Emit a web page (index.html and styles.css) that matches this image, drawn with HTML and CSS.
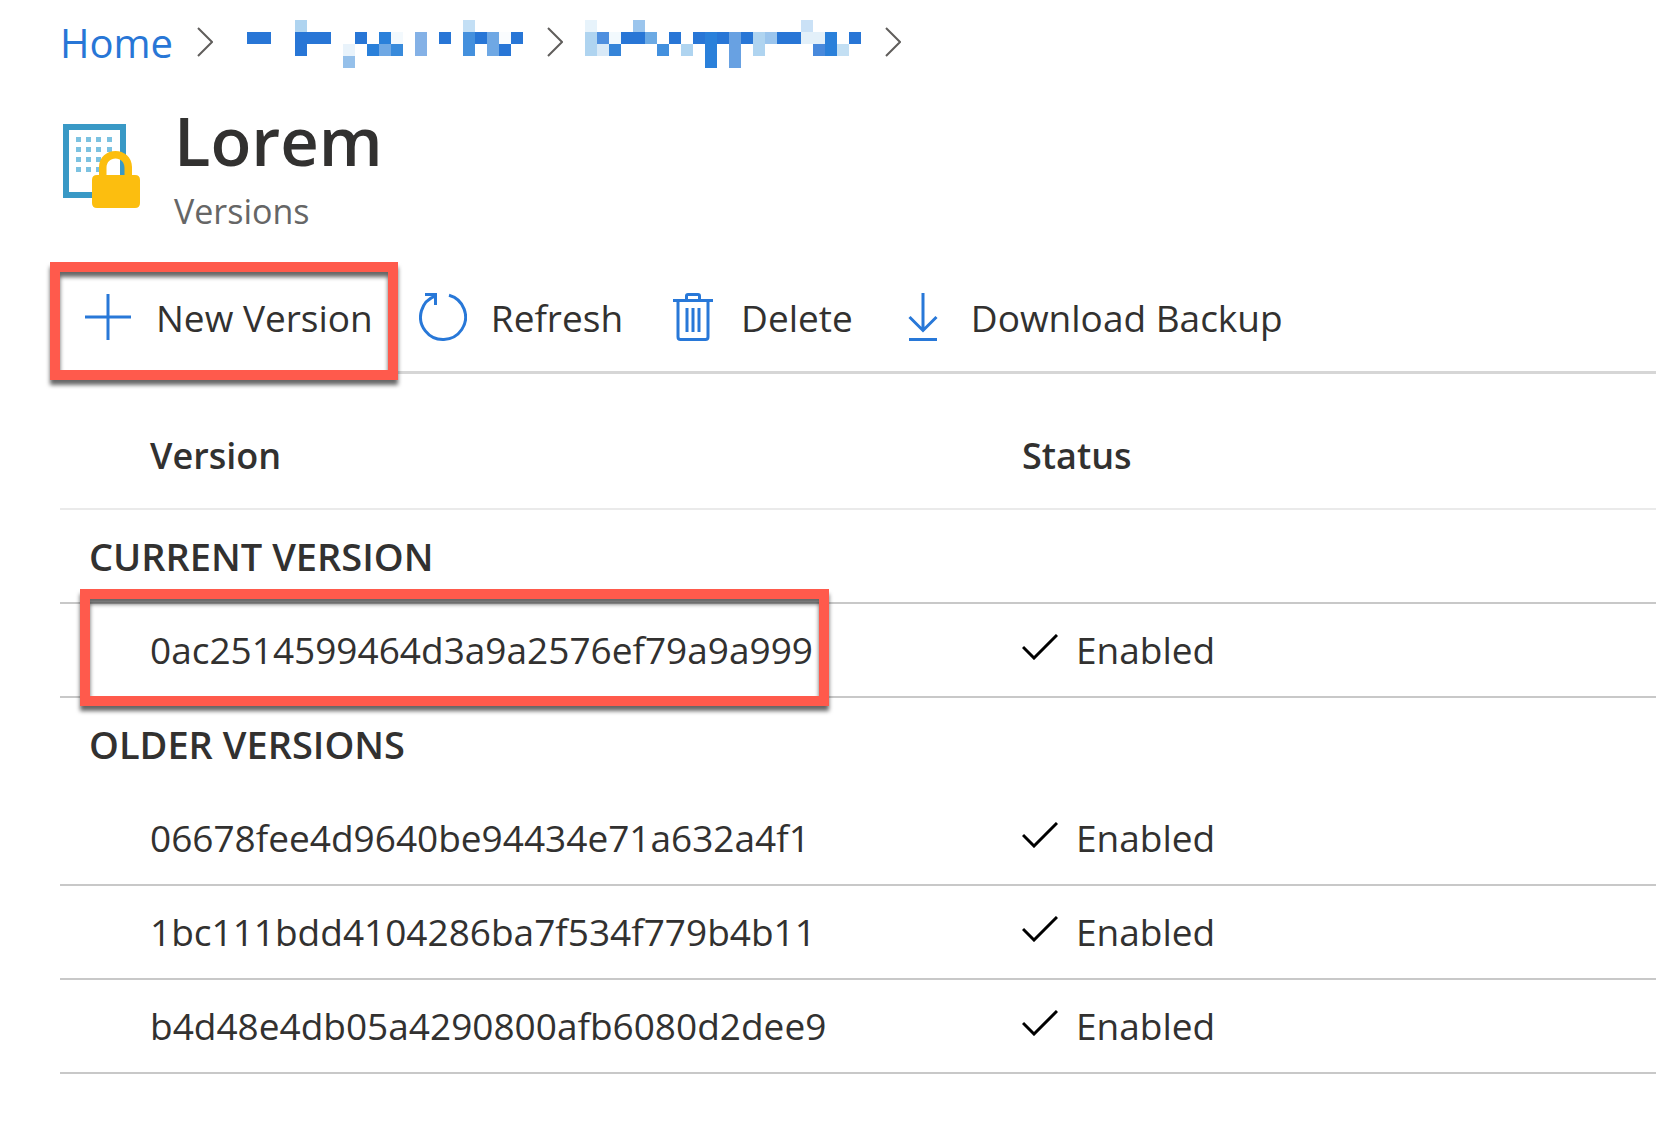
FILE: index.html
```html
<!DOCTYPE html>
<html lang="en">
<head>
    <meta charset="UTF-8">
    <meta name="viewport" content="width=device-width, initial-scale=1.0">
    <title>Lorem - Versions</title>
    <link rel="stylesheet" href="styles.css">
</head>
<body>
    <nav class="breadcrumb" aria-label="Breadcrumb">
        <a href="#">Home</a>
        <svg class="chevron" viewBox="0 0 16 30" aria-hidden="true"><path d="M1 1l14 14L1 29"/></svg>
        <a href="#" aria-label="Resource">
            <!-- redacted name, 12px blocks -->
            <svg class="redacted" width="288" height="54" viewBox="-12 -5 288 54" shape-rendering="crispEdges">
                <path fill="#2876d6" d="M0 12h24v12H0zM48 12h36v12H60v12H48zM108 12h12v12h-12zM192 12h12v12h-12zM228 12h12v12h-12zM252 24h12v12h-12zM264 12h12v12h-12z"/>
                <path fill="#2a80da" d="M120 24h12v12h-12zM132 12h12v12h-12z"/>
                <path fill="#afd4f0" d="M48 0h12v12H48z"/>
                <path fill="#e9f3fb" d="M96 24h12v12H96z"/>
                <path fill="#95c0ea" d="M96 36h12v12H96z"/>
                <path fill="#6fa8e4" d="M132 24h12v12h-12zM240 12h12v24h-12z"/>
                <path fill="#f3f9fd" d="M144 12h12v12h-12z"/>
                <path fill="#388adb" d="M144 24h12v12h-12z"/>
                <path fill="#84b1e6" d="M168 12h12v24h-12z"/>
                <path fill="#c3dff5" d="M216 0h12v12h-12z"/>
                <path fill="#4490dd" d="M216 12h12v24h-12z"/>
                <path fill="#fafcfe" d="M252 12h12v12h-12z"/>
            </svg>
        </a>
        <svg class="chevron" viewBox="0 0 16 30" aria-hidden="true"><path d="M1 1l14 14L1 29"/></svg>
        <a href="#" aria-label="Secrets">
            <svg class="redacted" width="276" height="54" viewBox="0 -5 276 54" shape-rendering="crispEdges">
                <path fill="#2876d6" d="M36 12h24v12H36zM84 12h12v12H84zM108 12h12v12h-12zM132 12h12v12h-12zM156 12h12v12h-12zM192 12h24v12h-24zM264 12h12v12h-12z"/>
                <path fill="#2a80da" d="M120 12h12v36h-12zM240 12h12v24h-12z"/>
                <path fill="#afd4f0" d="M0 12h12v24H0zM96 24h12v12H96zM168 12h12v24h-12z"/>
                <path fill="#e7f3fb" d="M0 0h12v12H0z"/>
                <path fill="#4e8fdf" d="M12 12h12v12H12z"/>
                <path fill="#d8e9f7" d="M12 24h12v12H12z"/>
                <path fill="#f2f9fd" d="M24 12h12v12H24z"/>
                <path fill="#3584d8" d="M24 24h12v12H24z"/>
                <path fill="#9bc5ed" d="M48 0h12v12H48zM180 12h12v12h-12z"/>
                <path fill="#6caae4" d="M60 12h12v12H60z"/>
                <path fill="#4390de" d="M72 24h12v12H72z"/>
                <path fill="#68a1e2" d="M144 12h12v36h-12z"/>
                <path fill="#cae1f6" d="M216 0h12v12h-12z"/>
                <path fill="#e3f0f9" d="M216 12h24v12h-24z"/>
                <path fill="#4889dc" d="M228 24h12v12h-12z"/>
                <path fill="#c3dff3" d="M252 24h12v12h-12z"/>
            </svg>
        </a>
        <svg class="chevron" viewBox="0 0 16 30" aria-hidden="true"><path d="M1 1l14 14L1 29"/></svg>
    </nav>

    <header class="page-header">
        <svg class="secret-icon" viewBox="0 0 78 84" aria-hidden="true">
            <path fill="#fff" stroke="#3999c6" stroke-width="6" d="M3 3h57v68H3z"/>
            <path fill="#7cc2e1" d="M13 13h5v5h-5zM23 13h5v5h-5zM33 13h5v5h-5zM44 13h5v5h-5zM13 23h5v5h-5zM23 23h5v5h-5zM33 23h5v5h-5zM44 23h5v5h-5zM13 33h5v5h-5zM23 33h5v5h-5zM33 33h5v5h-5zM13 43h5v5h-5zM23 43h5v5h-5zM33 43h5v5h-5z"/>
            <path fill="#fcbe0f" fill-rule="evenodd" d="M36 51V43C36 33 44 27 52.500 27S69 33 69 43v8h3q5 0 5 5v23q0 5-5 5H34q-5 0-5-5V56q0-5 5-5zM43.500 51h18v-7c0-6-4-9.500-9-9.500s-9 3.500-9 9.500z"/>
        </svg>
        <div>
            <h1>Lorem</h1>
            <p>Versions</p>
        </div>
    </header>

    <div class="toolbar">
        <button type="button">
            <svg viewBox="0 0 48 48" aria-hidden="true"><path d="M1 24h46M24 1v46"/></svg>
            New Version
            <span class="highlight"></span>
        </button>
        <button type="button">
            <svg viewBox="0 0 48 48" aria-hidden="true"><path d="M30 2.300A22.500 22.500 0 1 1 16.500 2.800M6 1.500h10.500V12"/></svg>
            Refresh
        </button>
        <button type="button">
            <svg viewBox="0 0 48 48" aria-hidden="true"><path d="M4 7.500h40M9 8v36q0 2.500 2.500 2.500h25q2.500 0 2.500-2.500V8M17.500 7V3q0-1.500 1.500-1.500h10q1.500 0 1.500 1.500v4M18 15v24M24 15v24M30 15v24"/></svg>
            Delete
        </button>
        <button type="button">
            <svg viewBox="0 0 48 48" aria-hidden="true"><path d="M24 0v37M10.500 24L24 37.500 37.500 24M10 46.500h28"/></svg>
            Download Backup
        </button>
    </div>

    <table class="versions">
        <thead>
            <tr>
                <th class="col-version">Version</th>
                <th>Status</th>
            </tr>
        </thead>
        <tbody>
            <tr>
                <th class="group" colspan="2">CURRENT VERSION</th>
            </tr>
            <tr>
                <td><div class="current">0ac2514599464d3a9a2576ef79a9a999<span class="highlight"></span></div></td>
                <td><svg class="check" viewBox="0 0 36 26" aria-hidden="true"><path d="M1 13l11 11L35 1"/></svg>Enabled</td>
            </tr>
        </tbody>
        <tbody>
            <tr class="no-line">
                <th class="group" colspan="2">OLDER VERSIONS</th>
            </tr>
            <tr>
                <td>06678fee4d9640be94434e71a632a4f1</td>
                <td><svg class="check" viewBox="0 0 36 26" aria-hidden="true"><path d="M1 13l11 11L35 1"/></svg>Enabled</td>
            </tr>
            <tr>
                <td>1bc111bdd4104286ba7f534f779b4b11</td>
                <td><svg class="check" viewBox="0 0 36 26" aria-hidden="true"><path d="M1 13l11 11L35 1"/></svg>Enabled</td>
            </tr>
            <tr>
                <td>b4d48e4db05a4290800afb6080d2dee9</td>
                <td><svg class="check" viewBox="0 0 36 26" aria-hidden="true"><path d="M1 13l11 11L35 1"/></svg>Enabled</td>
            </tr>
        </tbody>
    </table>
</body>
</html>
```
FILE: styles.css
```css
* { box-sizing: border-box; }
body {
    margin: 0;
    padding-left: 60px;
    background: #fff;
    color: #323130;
    font-family: "Open Sans", "Noto Sans", sans-serif;
    font-size: 37px;
}
svg { fill: none; flex: none; }

.breadcrumb {
    display: flex;
    align-items: center;
    height: 84px;
    font-size: 40px;
}
.breadcrumb a { color: #2876d6; text-decoration: none; }
.chevron {
    width: 16px;
    height: 30px;
    margin: 0 22px 0 24px;
    stroke: #605e5c;
    stroke-width: 2;
}
.redacted { display: block; }

.page-header { display: flex; padding: 12px 0 0 3px; }
.secret-icon { width: 78px; height: 84px; margin: 28px 33px 0 0; }
h1, p { margin: 0; }
h1 { font-size: 67px; font-weight: 600; line-height: 88px; }
p { color: #666; font-size: 34px; line-height: 54px; }

.toolbar {
    display: flex;
    gap: 46px;
    height: 113px;
    margin-top: 23px;
    padding-left: 24px;
    border-bottom: 3px solid #d6d6d6;
}
button {
    position: relative;
    display: flex;
    align-items: center;
    gap: 24px;
    padding: 2px 0 0;
    background: none;
    border: none;
    color: inherit;
    font: inherit;
    white-space: nowrap;
    cursor: pointer;
}
button svg { width: 48px; height: 48px; stroke: #2878d8; stroke-width: 3; }
button:hover { color: #2876d6; }

/* red call-out frame */
.highlight {
    position: absolute;
    border: 10px solid #ff5a4c;
    filter: drop-shadow(0 5px 2px rgba(0, 0, 0, 0.6));
    pointer-events: none;
}
button .highlight { inset: 1px -25px -9px -34px; }
.current .highlight { inset: -35px -16px -30px -70px; }

.versions { width: 100%; border-collapse: separate; border-spacing: 0; }
th, td {
    height: 94px;
    padding: 0;
    border-bottom: 2px solid #c8c8c8;
    line-height: 52px;
    text-align: left;
    white-space: nowrap;
}
th { font-weight: 600; }
td:first-child, .col-version { width: 962px; padding-left: 90px; }
thead th { height: 136px; padding-top: 30px; border-color: #eaeaea; font-size: 36px; }
.versions .group { padding-left: 29px; font-size: 38px; }
.no-line th { border-color: transparent; }
.current { position: relative; display: inline-block; }
.check {
    width: 36px;
    height: 26px;
    margin-right: 18px;
    stroke: #000;
    stroke-width: 3;
    vertical-align: 4px;
}
```
